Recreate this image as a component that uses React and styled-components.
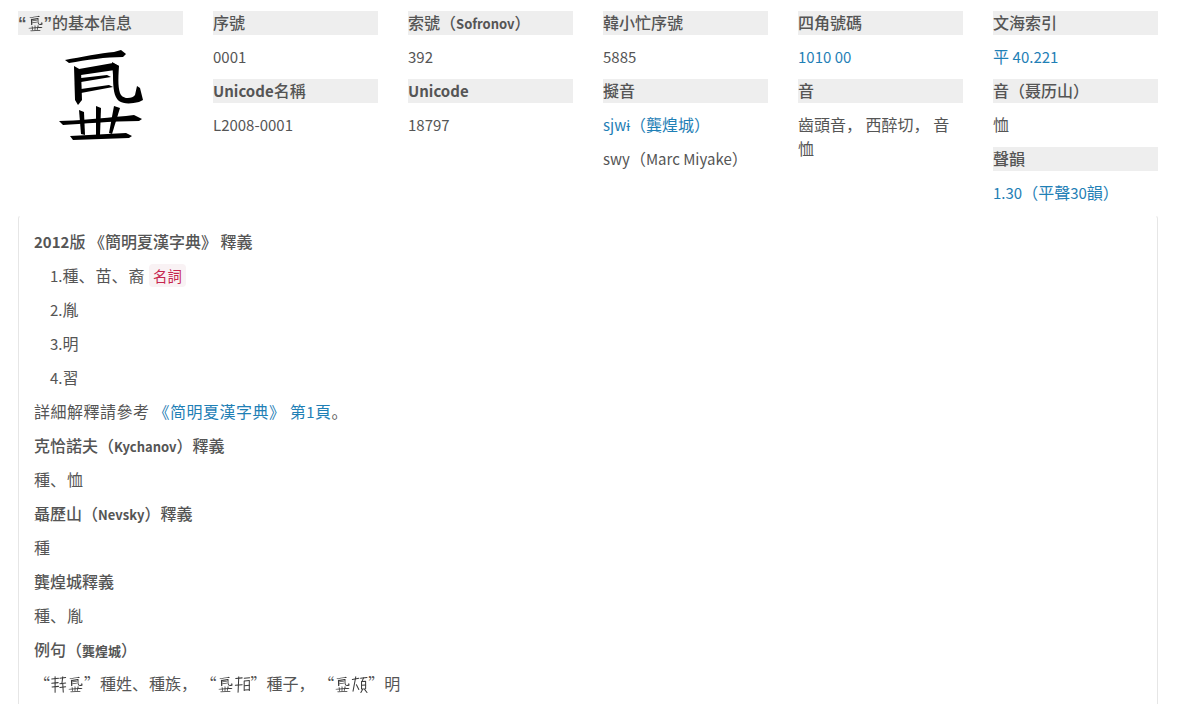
import styled, { createGlobalStyle } from 'styled-components'

const GlobalStyle = createGlobalStyle`
  html, body {
    margin: 0;
    padding: 0;
    height: 100%;
    overflow: hidden;
    background: #fff;
  }
  body {
    font-family: "Noto Sans CJK SC", "Noto Sans", sans-serif;
    font-size: 16px;
    line-height: 24px;
    color: #555;
  }
`

const Page = styled.div`
  width: 1140px;
  padding: 11px 0 0 18px;
`

const InfoGrid = styled.div`
  display: grid;
  grid-template-columns: repeat(6, 165px);
  column-gap: 30px;
`

const Column = styled.div`
  display: flex;
  flex-direction: column;
`

// 拉丁字母和数字在原页面用的字体更窄
const Latin = styled.span`
  font-size: 15px;
  line-height: 1;
`

const Small = styled.small`
  font-size: 13px;
  line-height: 1;
  font-weight: 700;
`

const Heading = styled.div`
  height: 24px;
  line-height: 22px;
  background: #eee;
  font-weight: 500;
  margin-bottom: 10px;
  white-space: nowrap;

  ${Latin} {
    font-weight: 700;
  }
`

const Value = styled.p`
  margin: -1px 0 11px;
`

const Link = styled.a`
  color: #1f80b6;
  text-decoration: none;
`

const NarrowQuote = styled.span`
  font-family: "Liberation Sans", sans-serif;
  font-size: 17px;
  line-height: 1;
  font-weight: 700;
`

const BigGlyph = styled.svg`
  display: block;
  width: 100px;
  height: 100px;
  margin: 0 auto;
  color: #000;
`

const InlineGlyph = styled.svg`
  display: inline-block;
  width: 17px;
  height: 17px;
  vertical-align: -3px;
  color: #3a3a3a;
`

const Panel = styled.section`
  border: 1px solid #e6e6e6;
  border-top-color: #fff;
  border-radius: 4px 4px 0 0;
  padding: 14px 15px 15px;
`

const Line = styled.p`
  margin: -1px 0 11px;
  letter-spacing: ${({ $wide }) => ($wide ? '0.5px' : 'normal')};
`

const Title = styled(Line)`
  font-weight: 500;

  ${Latin} {
    font-weight: 700;
  }
`

const Sense = styled(Line)`
  padding-left: 16px;
`

const Tag = styled.code`
  font-family: inherit;
  font-size: 14.4px;
  line-height: 1;
  color: #c7254e;
  background: #f9f2f4;
  border-radius: 4px;
  margin-left: 1px;
  padding: 1px 4px;
`

// 西夏字是原页面里的图片,这里用 svg 画
const seedShapes = [
  'M64 60 C80 57 100 53 113 52 L120 50 L125 54 L122 57 C105 57 85 60 68 63 Z',
  'M73 66 L80 70 L81 100 L77 105 L74 100 Z',
  'M78 69 L112 63 L118 66 L114 70 L80 75 Z',
  'M111 62 L118 66 C117 80 117 90 120 95 C124 100 132 98 134 95 L136 86 L139 88 C140 92 141 96 142 100 L138 102 C130 104 122 104 118 101 C113 97 112 88 112 75 Z',
  'M80 78 L106 75 L110 77 L80 82 Z',
  'M80 89 L108 85 L112 87 L80 93 Z',
  'M58 121 C75 121 100 118 125 116 L133 115 L141 119 L138 121 C110 121 80 124 62 125 Z',
  'M69 136 L125 133 L131 136 L128 138 L72 140 Z',
  'M78 110 L83 112 L84 135 L80 134 Z',
  'M95 106 L100 108 L99 135 L95 135 Z',
  'M113 106 L119 108 L111 134 L108 133 Z'
]

const otherStrokes = {
  left: [
    'M60 62 L100 58', 'M80 50 L80 90', 'M60 88 L98 84', 'M62 110 L100 106', 'M80 92 L80 140',
    'M108 58 L142 54', 'M125 50 L120 90', 'M108 90 L142 86', 'M108 112 L142 108', 'M125 92 L128 140'
  ],
  right: [
    'M60 60 L98 56', 'M78 50 L74 140', 'M58 100 L98 96', 'M110 58 L142 55', 'M112 74 L140 72',
    'M110 74 L110 130', 'M140 74 L140 130', 'M112 102 L140 100', 'M112 128 L140 126'
  ],
  fold: [
    'M58 66 L96 58', 'M78 50 L62 134', 'M82 96 L96 124', 'M106 58 L144 54', 'M124 56 L114 78',
    'M112 78 L136 76 L136 120 L112 122 Z', 'M112 100 L136 98', 'M118 124 L108 142', 'M130 124 L144 142'
  ]
}

const TangutGlyph = ({ name = 'seed', as: Svg = InlineGlyph }) => (
  <Svg viewBox="50 45 100 100" aria-hidden="true">
    {name === 'seed'
      ? seedShapes.map((d) => <path key={d} d={d} fill="currentColor" />)
      : otherStrokes[name].map((d) => (
          <path key={d} d={d} fill="none" stroke="currentColor" strokeWidth="6" strokeLinecap="round" strokeLinejoin="round" />
        ))}
  </Svg>
)

const App = () => (
  <Page>
    <GlobalStyle />
    <InfoGrid>
      <Column>
        <Heading><NarrowQuote>“</NarrowQuote><TangutGlyph /><NarrowQuote>”</NarrowQuote>的基本信息</Heading>
        <TangutGlyph as={BigGlyph} />
      </Column>

      <Column>
        <Heading>序號</Heading>
        <Value><Latin>0001</Latin></Value>
        <Heading><Latin>Unicode</Latin>名稱</Heading>
        <Value><Latin>L2008-0001</Latin></Value>
      </Column>

      <Column>
        <Heading>索號（<Small>Sofronov</Small>）</Heading>
        <Value><Latin>392</Latin></Value>
        <Heading><Latin>Unicode</Latin></Heading>
        <Value><Latin>18797</Latin></Value>
      </Column>

      <Column>
        <Heading>韓小忙序號</Heading>
        <Value><Latin>5885</Latin></Value>
        <Heading>擬音</Heading>
        <Value><Link href="#"><Latin>sjwɨ</Latin>（龔煌城）</Link></Value>
        <Value><Latin>swy</Latin>（<Latin>Marc Miyake</Latin>）</Value>
      </Column>

      <Column>
        <Heading>四角號碼</Heading>
        <Value><Link href="#"><Latin>1010 00</Latin></Link></Value>
        <Heading>音</Heading>
        <Value>齒頭音， 西醉切， 音恤</Value>
      </Column>

      <Column>
        <Heading>文海索引</Heading>
        <Value><Link href="#">平 <Latin>40.221</Latin></Link></Value>
        <Heading>音（聂历山）</Heading>
        <Value>恤</Value>
        <Heading>聲韻</Heading>
        <Value><Link href="#"><Latin>1.30</Latin>（平聲<Latin>30</Latin>韻）</Link></Value>
      </Column>
    </InfoGrid>

    <Panel>
      <Title><Latin>2012</Latin>版 《簡明夏漢字典》 釋義</Title>
      <Sense><Latin>1.</Latin>種、&#8202;苗、&#8202;裔 <Tag>名詞</Tag></Sense>
      <Sense><Latin>2.</Latin>胤</Sense>
      <Sense><Latin>3.</Latin>明</Sense>
      <Sense><Latin>4.</Latin>習</Sense>
      <Line $wide>詳細解釋請參考 <Link href="#">《简明夏漢字典》 第<Latin>1</Latin>頁</Link>。</Line>
      <Title>克恰諾夫（<Small>Kychanov</Small>）釋義</Title>
      <Line>種、&#8202;恤</Line>
      <Title>聶歷山（<Small>Nevsky</Small>）釋義</Title>
      <Line>種</Line>
      <Title>龔煌城釋義</Title>
      <Line>種、&#8202;胤</Line>
      <Title>例句（<Small>龔煌城</Small>）</Title>
      <Line>
        “<TangutGlyph name="left" /><TangutGlyph />”種姓、&#8202;種族， “<TangutGlyph /><TangutGlyph name="right" />”種子， “<TangutGlyph /><TangutGlyph name="fold" />”明
      </Line>
    </Panel>
  </Page>
)

export default App
